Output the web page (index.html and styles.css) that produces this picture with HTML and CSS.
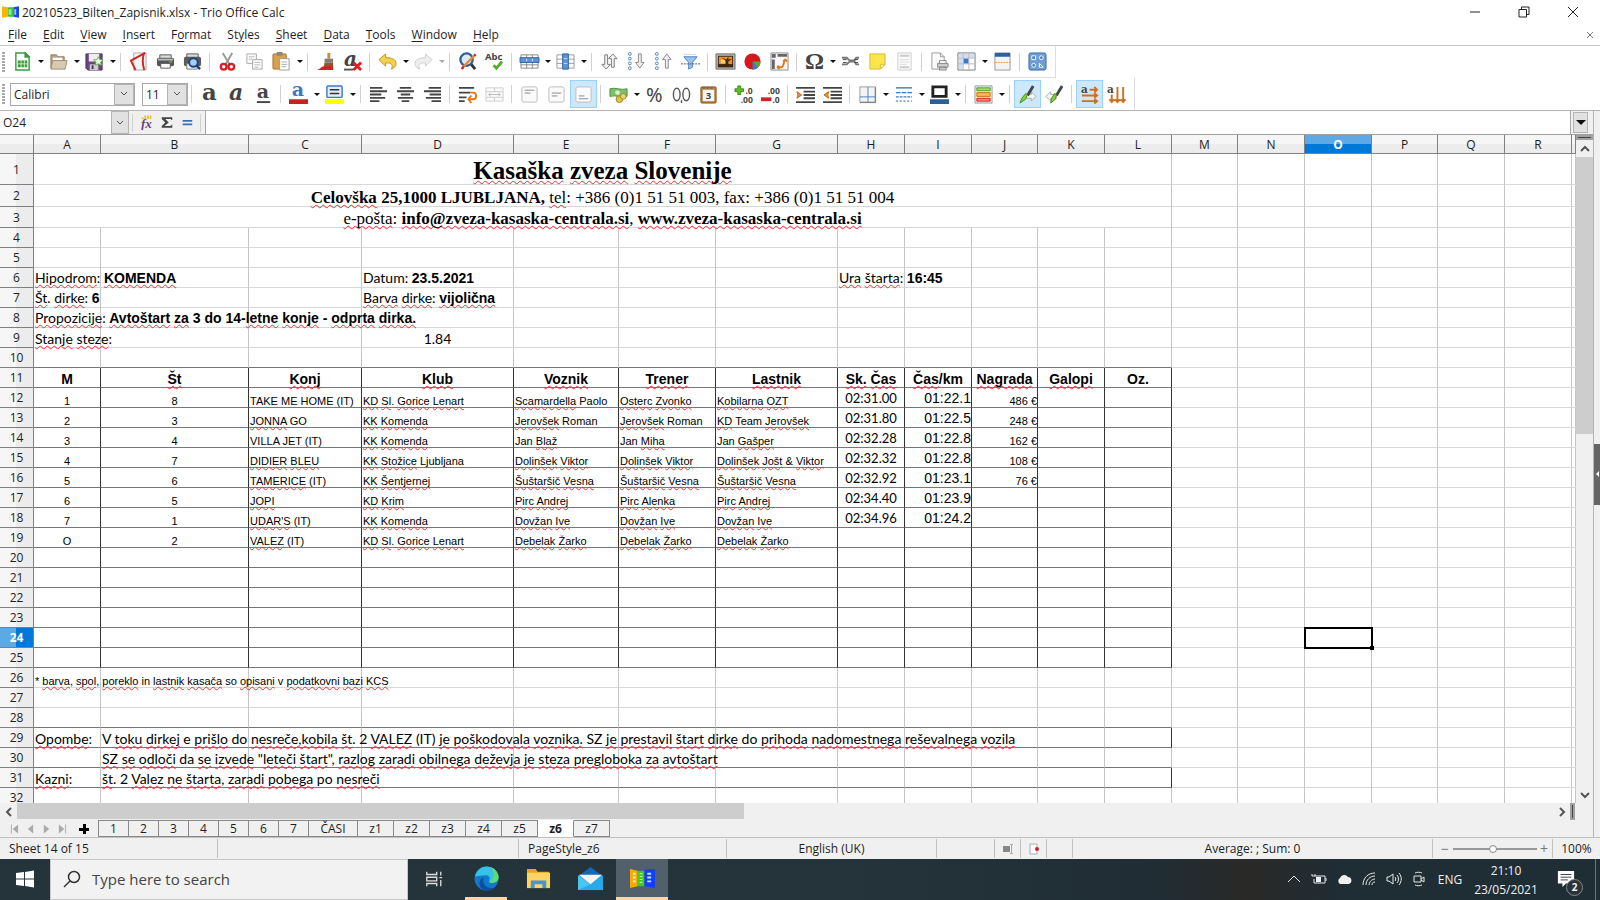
FILE: index.html
```html
<!DOCTYPE html>
<html lang="en">
<head>
    <meta charset="UTF-8">
    <meta name="viewport" content="width=device-width, initial-scale=1.0">
    <title>20210523_Bilten_Zapisnik.xlsx - Trio Office Calc</title>
    <link rel="stylesheet" href="styles.css">
</head>
<body>
    <header class="title-bar">
        <svg class="app-icon" viewBox="0 0 18 14"><path fill="#f7b500" d="M0 1l6 1v10l-6 1z"/><path fill="#35c435" d="M6 2h6v10H6z"/><path fill="#1747f0" d="M12 2l6-1v12l-6-1z"/><path fill="#9be89b" d="M7 4h3v6H7z"/><path fill="#a9c4ff" d="M13 4h2v6h-2z"/></svg>
        <span class="title-text">20210523_Bilten_Zapisnik.xlsx - Trio Office Calc</span>
        <div class="window-buttons">
            <button aria-label="Minimize"><svg viewBox="0 0 12 12"><path d="M1 6h10"/></svg></button>
            <button aria-label="Restore"><svg viewBox="0 0 12 12"><path d="M1 3.5h7.500v7.500H1zM3.500 3.500V1H11v7.500H8.500"/></svg></button>
            <button aria-label="Close"><svg viewBox="0 0 12 12"><path d="M1 1l10 10M11 1L1 11"/></svg></button>
        </div>
    </header>

    <nav class="menu-bar">
        <a href="#file"><u>F</u>ile</a>
        <a href="#edit"><u>E</u>dit</a>
        <a href="#view"><u>V</u>iew</a>
        <a href="#insert"><u>I</u>nsert</a>
        <a href="#format">F<u>o</u>rmat</a>
        <a href="#styles">St<u>y</u>les</a>
        <a href="#sheet"><u>S</u>heet</a>
        <a href="#data"><u>D</u>ata</a>
        <a href="#tools"><u>T</u>ools</a>
        <a href="#window"><u>W</u>indow</a>
        <a href="#help"><u>H</u>elp</a>
        <button class="close-doc" aria-label="Close document"><svg viewBox="0 0 8 8"><path d="M1 1l6 6M7 1L1 7"/></svg></button>
    </nav>

    <!-- Standard toolbar -->
    <div class="toolbar standard">
        <span class="grip"></span>
        <button class="tool" aria-label="New"><svg viewBox="0 0 20 20"><path fill="#fff" stroke="#3d9a3d" stroke-width="1.500" d="M3 1h10l4 4v14H3z"/><path fill="#3d9a3d" d="M12 0h1l5 5v1h-6zM5 9h10v7H5z"/><path stroke="#c8f0c0" d="M5 12.500h10M8.500 9v7M12 9v7"/></svg></button>
        <button class="caret" aria-label="New options"></button>
        <button class="tool" aria-label="Open"><svg viewBox="0 0 20 20"><path fill="#b8a78a" stroke="#8d7c62" d="M2 17V3h6l1 2h7v4"/><path fill="#fff" d="M4 6h10v4H4z"/><path fill="#d8cab0" stroke="#9c8b70" d="M4 9h15l-2 9H2z"/></svg></button>
        <button class="caret" aria-label="Open options"></button>
        <button class="tool" aria-label="Save"><svg viewBox="0 0 20 20"><path fill="#6c4580" stroke="#4b2c5e" d="M1 2h17v17H3l-2-2z"/><path fill="#eee" d="M4 2h11v8H4z"/><path fill="#ccc" d="M5 13h9v6H5z"/><path fill="#4b2c5e" d="M7 14h2v4H7z"/><path fill="#e8ffe0" stroke="#5bbb3a" d="M14 5l1.500 3 3.500.3-2.500 2.400.8 3.300-3.300-1.600-3 1.600.6-3.500L9 8.300l3.500-.3z"/></svg></button>
        <button class="caret" aria-label="Save options"></button>
        <span class="sep"></span>
        <button class="tool" aria-label="Export as PDF"><svg viewBox="0 0 20 20"><path fill="#f4f4f4" stroke="#aaa" d="M5 1h13v18H5z"/><path fill="none" stroke="#cf2222" stroke-width="2" d="M17 1L2 9l5 10M16 1c-2 5-2 11 0 18"/></svg></button>
        <button class="tool" aria-label="Print"><svg viewBox="0 0 20 20"><path fill="#ddd" stroke="#555" d="M4 3h12v5H4z"/><rect x="1" y="6" width="18" height="9" rx="2" fill="#555"/><path fill="#b9b9b9" d="M2 7h16v2H2z"/><path fill="#fff" stroke="#555" d="M5 12h10v5H5z"/><path stroke="#7fcf5f" d="M14 10.500h3"/></svg></button>
        <button class="tool" aria-label="Print Preview"><svg viewBox="0 0 20 20"><path fill="#ddd" stroke="#555" d="M4 2h12v5H4z"/><rect x="1" y="5" width="18" height="10" rx="2" fill="#5a5a5a"/><path fill="#fff" stroke="#777" d="M4 12h11v6H4z"/><circle cx="11" cy="11" r="4.500" fill="#a9cdf2" stroke="#1d4480" stroke-width="2"/><path stroke="#1d4480" stroke-width="2.500" d="M14 14l4 4"/></svg></button>
        <span class="sep"></span>
        <button class="tool" aria-label="Cut"><svg viewBox="0 0 20 20"><path stroke="#999" stroke-width="2" d="M5 1l7 12M15 1L8 13"/><g fill="none" stroke="#d3202a" stroke-width="2.500"><circle cx="6" cy="15.500" r="3"/><circle cx="14" cy="15.500" r="3"/></g></svg></button>
        <button class="tool" aria-label="Copy"><svg viewBox="0 0 20 20"><g fill="#fafafa" stroke="#aaa"><path d="M2 2h10v10H2z"/><path d="M8 8h10v10H8z"/></g><path stroke="#bbb" d="M4 5h6M4 7.500h4M10 11h6M10 13.500h6M10 16h4"/></svg></button>
        <button class="tool" aria-label="Paste"><svg viewBox="0 0 20 20"><rect x="1" y="2" width="14" height="16" rx="1" fill="#d9a04e" stroke="#a8742c"/><path fill="#888" d="M5 0h6v4H5z"/><path fill="#fff" stroke="#999" d="M8 7h10v12H8z"/><path stroke="#aaa" d="M10 10.500h6M10 13h6M10 15.500h5"/></svg></button>
        <button class="caret" aria-label="Paste options"></button>
        <span class="sep"></span>
        <button class="tool" aria-label="Clone Formatting"><svg viewBox="0 0 20 20"><path fill="#c98a35" d="M12 1h3v6h-3z"/><path fill="#7d7d7d" d="M9 7h9v4H9z"/><path fill="#8b5a2b" d="M9 11h9v6H8z"/><path fill="#d3202a" d="M1 19c3-1 4-3 7-4h10v4z"/></svg></button>
        <button class="tool" aria-label="Clear Formatting"><svg viewBox="0 0 20 20"><text class="glyph slab italic" x="1" y="15" font-size="21">a</text><path stroke="#555" stroke-width="2" d="M1 18.500h10"/><path stroke="#e02020" stroke-width="3" d="M11 11l8 8M19 11l-8 8"/></svg></button>
        <span class="sep"></span>
        <button class="tool" aria-label="Undo"><svg viewBox="0 0 20 20"><path fill="#f3d24a" stroke="#b8962a" d="M1 8l7-6v4c7 0 11 2 11 6 0 3-2 5-5 6 2-4 1-7-6-6.500V15z"/></svg></button>
        <button class="caret" aria-label="Undo options"></button>
        <button class="tool" aria-label="Redo"><svg viewBox="0 0 20 20"><path fill="#eee" stroke="#ccc" d="M19 8l-7-6v4C5 6 1 8 1 12c0 3 2 5 5 6-2-4-1-7 6-6.500V15z"/></svg></button>
        <button class="caret faded" aria-label="Redo options"></button>
        <span class="sep"></span>
        <button class="tool" aria-label="Find and Replace"><svg viewBox="0 0 20 20"><circle cx="9" cy="8" r="6.500" fill="#dceafa" stroke="#2e5fa3" stroke-width="2.500"/><path stroke="#333" stroke-width="3" d="M14 13l4 5"/><path stroke="#e88a2a" stroke-width="2.500" d="M17 4L6 15"/><path stroke="#d3202a" stroke-width="2.500" d="M17 4l1.500-1.500M6 15l-2 3"/></svg></button>
        <button class="tool" aria-label="Spelling"><svg viewBox="0 0 20 20"><text class="glyph bold" x="0" y="8" font-size="10">Abc</text><path fill="none" stroke="#57ae2e" stroke-width="3" d="M9 14l3 3 6-7"/></svg></button>
        <span class="sep"></span>
        <button class="tool" aria-label="Row"><svg viewBox="0 0 20 20"><path fill="#fff" stroke="#888" d="M1 3h18v14H1z"/><path stroke="#888" d="M1 13.500h18M7 3v14M13 3v14"/><path fill="#5b93d3" stroke="#2e5fa3" d="M0 6h20v5H0z"/><path stroke="#cfe2f7" d="M7 7v3M13 7v3"/></svg></button>
        <button class="caret" aria-label="Row options"></button>
        <button class="tool" aria-label="Column"><svg viewBox="0 0 20 20"><path fill="#fff" stroke="#999" d="M1 3h18v14H1z"/><path stroke="#999" d="M1 7.500h18M1 12h18"/><path fill="#5b93d3" stroke="#2e5fa3" d="M7 2h6v16H7z"/><path stroke="#cfe2f7" d="M8 7h4M8 12h4"/></svg></button>
        <button class="caret" aria-label="Column options"></button>
        <span class="sep"></span>
        <button class="tool" aria-label="Sort"><svg viewBox="0 0 20 20"><g fill="#f2f2f2" stroke="#777"><path d="M5 3h3v10h3l-4.500 5L2 13h3z"/><path d="M12 16h3V7h3l-4.500-5L9 7h3z"/></g></svg></button>
        <button class="tool" aria-label="Sort Ascending"><svg viewBox="0 0 20 20"><g fill="#fff" stroke="#4a82c8"><circle cx="3" cy="2" r="1.500"/><circle cx="3" cy="7" r="1.500"/><circle cx="3" cy="12" r="1.500"/><circle cx="3" cy="17" r="1.500"/></g><path fill="#eee" stroke="#888" d="M12 2h3v9h3l-4.500 6L9 11h3z"/></svg></button>
        <button class="tool" aria-label="Sort Descending"><svg viewBox="0 0 20 20"><g fill="#fff" stroke="#4a82c8"><circle cx="3" cy="2" r="1.500"/><circle cx="3" cy="7" r="1.500"/><circle cx="3" cy="12" r="1.500"/><circle cx="3" cy="17" r="1.500"/></g><path fill="#eee" stroke="#888" d="M12 17h3V8h3l-4.500-6L9 8h3z"/></svg></button>
        <button class="tool" aria-label="AutoFilter"><svg viewBox="0 0 20 20"><path fill="#9cc3ec" stroke="#4a82c8" d="M3 5h14l-5 6v5l-4 2v-7z"/><path stroke="#aaa" stroke-dasharray="1 1" d="M3 2.500h14"/><path stroke="#555" stroke-dasharray="2 1" d="M0 12.500h20"/></svg></button>
        <span class="sep"></span>
        <button class="tool" aria-label="Image"><svg viewBox="0 0 20 20"><path fill="#bbb" stroke="#666" d="M0 2h20v16H0z"/><path fill="#3f2710" d="M2 4h16v12H2z"/><path fill="#e8902c" d="M3 5h14v8H3z"/><path fill="#f8d070" d="M5 8h6v4H5z"/><path fill="#3f2710" d="M2 13h8V9L6 6l5 2 2-3v3l4-1-4 3v3h5v3H2z"/></svg></button>
        <button class="tool" aria-label="Chart"><svg viewBox="0 0 20 20"><circle cx="10" cy="10" r="8.500" fill="#d8161c"/><path fill="#5aa83a" d="M10 10l8.500 0a8.500 8.500 0 0 1-3 6.500z"/><path fill="#3d78c4" d="M10 10l5.500 6.500A8.500 8.500 0 0 1 10 18.500z"/></svg></button>
        <button class="tool" aria-label="Pivot Table"><svg viewBox="0 0 20 20"><path fill="#f7f7f7" stroke="#888" d="M1 1h18v18H1z"/><path fill="#666" d="M2 2h4v4H2zM8 2h10v3H8zM2 8h3v10H2z"/><path fill="none" stroke="#e07818" stroke-width="2" d="M9 16h3c3 0 2-7 4-7M9 14l-1 2 2 2M14 10l2-2 2 2"/></svg></button>
        <span class="sep"></span>
        <button class="tool" aria-label="Special Character"><svg viewBox="0 0 20 20"><text class="glyph serif-bold" x="0" y="18" font-size="25">Ω</text></svg></button>
        <button class="caret" aria-label="Special Character options"></button>
        <button class="tool" aria-label="Hyperlink"><svg viewBox="0 0 20 20"><g fill="none" stroke="#777" stroke-width="2"><path d="M1 6h5l3 3h5l2-3h3M1 13h5l3-3h5l2 3h3"/></g><path stroke="#444" d="M2 8h4M2 11h4M14 8h4M14 11h4"/></svg></button>
        <button class="tool" aria-label="Comment"><svg viewBox="0 0 20 20"><path fill="#fbe44c" stroke="#d9bd2a" d="M2 2h16v11l-5 5H2z"/><path fill="#fff6b0" stroke="#d9bd2a" d="M13 18v-5h5z"/></svg></button>
        <button class="tool" aria-label="Headers and Footers"><svg viewBox="0 0 20 20"><path fill="#fafafa" stroke="#ccc" d="M3 1h14v18H3z"/><path stroke="#ccc" stroke-width="2" d="M5 4h10M5 16h10"/><path stroke="#ddd" d="M5 8h10M5 10.500h10M5 13h8"/></svg></button>
        <span class="sep"></span>
        <button class="tool" aria-label="Define Print Area"><svg viewBox="0 0 20 20"><path fill="#fafafa" stroke="#999" d="M2 1h9l4 4v13H2z"/><path fill="none" stroke="#999" d="M11 1v4h4"/><path fill="#fff" stroke="#888" d="M10 9h7v4h-7z"/><path fill="#ccc" stroke="#888" d="M8 12h11v4H8zM10 16h7v3h-7z"/></svg></button>
        <button class="tool" aria-label="Freeze Rows and Columns"><svg viewBox="0 0 20 20"><path fill="#fff" stroke="#777" d="M1 1h18v18H1z"/><path fill="#cfe0f3" d="M2 2h16v4H2zM2 2h4v16H2z"/><path stroke="#bbb" d="M1 6.500h18M1 12.500h18M6.500 1v18M12.500 1v18"/><path fill="#3d78c4" d="M7 7h5v5H7z"/></svg></button>
        <button class="caret" aria-label="Freeze options"></button>
        <button class="tool" aria-label="Split Window"><svg viewBox="0 0 20 20"><path fill="#f4f4f4" stroke="#999" d="M2 1h16v18H2z"/><path fill="#2e5fa3" d="M2 1h16v4H2z"/><path stroke="#e8902c" stroke-dasharray="2 1" d="M2 11h16"/></svg></button>
        <span class="sep"></span>
        <button class="tool" aria-label="Show Draw Functions"><svg viewBox="0 0 20 20"><rect x="1" y="1" width="18" height="18" rx="2" fill="#6f9dd6" stroke="#3b69a8"/><g fill="#4a7dc0" stroke="#fff"><path d="M4 4h4v4H4zM12 16l0-4 4 4z"/><circle cx="14" cy="6" r="2"/><circle cx="6" cy="14" r="2"/></g></svg></button>
    </div>

    <!-- Formatting toolbar -->
    <div class="toolbar formatting">
        <span class="grip"></span>
        <label class="combo font-name"><select aria-label="Font Name"><option>Calibri</option></select></label>
        <label class="combo font-size"><select aria-label="Font Size"><option>11</option></select></label>
        <span class="sep"></span>
        <button class="tool" aria-label="Bold"><svg viewBox="0 0 20 20"><text class="glyph slab" x="2" y="16" font-size="24">a</text></svg></button>
        <button class="tool" aria-label="Italic"><svg viewBox="0 0 20 20"><text class="glyph slab italic" x="2" y="16" font-size="23">a</text></svg></button>
        <button class="tool" aria-label="Underline"><svg viewBox="0 0 20 20"><text class="glyph slab" x="3" y="14" font-size="20">a</text><path stroke="#444" stroke-width="2" d="M3 18h14"/></svg></button>
        <span class="sep"></span>
        <button class="tool" aria-label="Font Color"><svg viewBox="0 0 20 20"><text class="glyph slab blue" x="3" y="12" font-size="20">a</text><path fill="#c9211e" d="M0 15h20v5H0z"/></svg></button>
        <button class="caret" aria-label="Font Color options"></button>
        <button class="tool" aria-label="Highlighting"><svg viewBox="0 0 20 20"><rect x="2" y="1" width="16" height="12" rx="1" fill="#e4eefa" stroke="#3d78c4" stroke-width="1.500"/><path stroke="#333" stroke-width="1.500" d="M5 5h10M5 9h10"/><path fill="#ff0" d="M0 15h20v5H0z"/></svg></button>
        <button class="caret" aria-label="Highlighting options"></button>
        <span class="sep"></span>
        <button class="tool" aria-label="Align Left"><svg class="lines" viewBox="0 0 20 20"><path d="M1 3h13M1 6.500h18M1 10h12M1 13.500h16M1 17h10"/></svg></button>
        <button class="tool" aria-label="Center Horizontally"><svg class="lines" viewBox="0 0 20 20"><path d="M4 3h12M1 6.500h18M5 10h10M2 13.500h16M6 17h8"/></svg></button>
        <button class="tool" aria-label="Align Right"><svg class="lines" viewBox="0 0 20 20"><path d="M6 3h13M1 6.500h18M7 10h12M3 13.500h16M9 17h10"/></svg></button>
        <span class="sep"></span>
        <button class="tool" aria-label="Wrap Text"><svg viewBox="0 0 20 20"><path stroke="#444" stroke-width="2" d="M1 3h16M1 8h12M1 13h8M1 17h6"/><path fill="none" stroke="#e07818" stroke-width="2" d="M13 8h3c4 0 4 7 0 7h-4M14 11l-3 4 3 4"/></svg></button>
        <button class="tool" aria-label="Merge and Center Cells"><svg viewBox="0 0 20 20"><path fill="#fafafa" stroke="#ccc" d="M1 3h18v14H1z"/><path stroke="#ccc" d="M1 7h18M1 13h18M10 3v4M10 13v4"/><path fill="none" stroke="#bbb" d="M4 10h12M6 8l-2 2 2 2M14 8l2 2-2 2"/></svg></button>
        <span class="sep"></span>
        <button class="tool" aria-label="Align Top"><svg class="valign" viewBox="0 0 20 20"><rect x="2" y="2" width="16" height="16" rx="2"/><path d="M5 5.500h10M5 8.500h6"/></svg></button>
        <button class="tool" aria-label="Center Vertically"><svg class="valign" viewBox="0 0 20 20"><rect x="2" y="2" width="16" height="16" rx="2"/><path d="M5 8.500h10M5 11.500h6"/></svg></button>
        <button class="tool pressed" aria-label="Align Bottom"><svg class="valign" viewBox="0 0 20 20"><rect x="2" y="2" width="16" height="16" rx="2"/><path d="M5 11.500h6M5 14.500h10"/></svg></button>
        <span class="sep"></span>
        <button class="tool" aria-label="Format as Currency"><svg viewBox="0 0 20 20"><path fill="#7fbf6a" stroke="#4c8f3a" d="M1 4c5-2 12 2 18 0v8c-6 2-12-2-18 0z"/><circle cx="9" cy="8" r="2.500" fill="#d8f0cc"/><circle cx="11" cy="15" r="3.500" fill="#e0c44a" stroke="#a08420"/><circle cx="15" cy="12" r="3" fill="#ecd670" stroke="#a08420"/></svg></button>
        <button class="caret" aria-label="Currency options"></button>
        <button class="tool" aria-label="Format as Percent"><svg viewBox="0 0 20 20"><text class="glyph" x="1" y="18" font-size="21">%</text></svg></button>
        <button class="tool" aria-label="Format as Number"><svg viewBox="0 0 20 20"><g fill="none" stroke="#555" stroke-width="1.500"><ellipse cx="5" cy="10" rx="3.500" ry="6.500"/><ellipse cx="15" cy="10" rx="3.500" ry="6.500"/></g><path stroke="#555" stroke-width="1.500" d="M10 16v3"/></svg></button>
        <button class="tool" aria-label="Format as Date"><svg viewBox="0 0 20 20"><rect x="2" y="2" width="16" height="17" rx="1" fill="#b98443" stroke="#805521"/><path fill="#f6f6f6" d="M4 5h12v12H4z"/><path stroke="#666" stroke-width="2" stroke-dasharray="2 2" d="M4 3h12"/><text class="glyph bold" x="7" y="15" font-size="10">3</text></svg></button>
        <span class="sep"></span>
        <button class="tool" aria-label="Add Decimal Place"><svg viewBox="0 0 20 20"><path fill="#5cc42a" stroke="#3a8a16" d="M4 1h3v3h3v3H7v3H4V7H1V4h3z"/><text class="glyph bold" x="12" y="9" font-size="9">.0</text><text class="glyph bold" x="7" y="19" font-size="9">.00</text></svg></button>
        <button class="tool" aria-label="Delete Decimal Place"><svg viewBox="0 0 20 20"><path fill="#d3202a" d="M0 13h11v4H0z"/><text class="glyph bold" x="7" y="9" font-size="9">.00</text><text class="glyph bold" x="12" y="19" font-size="9">.0</text></svg></button>
        <span class="sep"></span>
        <button class="tool" aria-label="Increase Indent"><svg viewBox="0 0 20 20"><path stroke="#444" stroke-width="2" d="M0 3h20M8 7h12M8 10.500h12M8 14h12M0 18h20"/><path fill="#e8902c" stroke="#c86810" d="M1 7l5 3.500L1 14l1-3.500z"/></svg></button>
        <button class="tool" aria-label="Decrease Indent"><svg viewBox="0 0 20 20"><path stroke="#444" stroke-width="2" d="M0 3h20M8 7h12M8 10.500h12M8 14h12M0 18h20"/><path fill="#e8902c" stroke="#c86810" d="M6 7l-5 3.500L6 14l-1-3.500z"/></svg></button>
        <span class="sep"></span>
        <button class="tool" aria-label="Borders"><svg viewBox="0 0 20 20"><path fill="#f4f4f4" stroke="#999" d="M2 2h16v16H2z"/><path stroke="#4a82c8" d="M10.500 2v16M2 12.500h16"/><path fill="none" stroke="#777" d="M2 18.500h16.500V2"/></svg></button>
        <button class="caret" aria-label="Borders options"></button>
        <button class="tool" aria-label="Border Style"><svg viewBox="0 0 20 20"><g stroke="#3d78c4" stroke-width="1.500"><path d="M2 3h17"/><path stroke-dasharray="5 1" d="M2 8h17"/><path stroke-dasharray="3 1" d="M2 12.500h17"/><path stroke-dasharray="2 2" d="M2 17h17"/></g></svg></button>
        <button class="caret" aria-label="Border Style options"></button>
        <button class="tool" aria-label="Border Color"><svg viewBox="0 0 20 20"><path fill="#fff" stroke="#222" stroke-width="3" d="M3 2h14v10H3z"/><path fill="#2a6099" d="M0 15h20v5H0z"/></svg></button>
        <button class="caret" aria-label="Border Color options"></button>
        <span class="sep"></span>
        <button class="tool" aria-label="Conditional Formatting"><svg viewBox="0 0 20 20"><path fill="#f0f0f0" stroke="#999" d="M1 1h18v18H1z"/><path fill="#a8e060" stroke="#4c9a20" d="M3 3h14v3H3z"/><path fill="#ffb060" stroke="#d07010" d="M3 8h14v4H3z"/><path fill="#ff8080" stroke="#d02020" d="M3 14h14v3H3z"/></svg></button>
        <button class="caret" aria-label="Conditional Formatting options"></button>
        <span class="sep"></span>
        <button class="tool pressed" aria-label="Left-To-Right"><svg viewBox="0 0 20 20"><path fill="#f4f4f4" stroke="#aaa" d="M9 10h5V7l5 5-5 5v-3H9z"/><path stroke="#444" stroke-width="3" d="M16 1l-6 10"/><path fill="#7fcf3f" stroke="#4c8f1a" d="M10 10l-2-1-4 5-2 5 6-4z"/></svg></button>
        <button class="tool" aria-label="Right-To-Left"><svg viewBox="0 0 20 20"><path fill="#f4f4f4" stroke="#aaa" d="M12 10H6V7l-5 5 5 5v-3h6z"/><path stroke="#444" stroke-width="3" d="M18 1l-6 10"/><path fill="#7fcf3f" stroke="#4c8f1a" d="M12 10l-2-1-3 5-1 5 5-4z"/></svg></button>
        <span class="sep"></span>
        <button class="tool pressed" aria-label="Text direction left to right"><svg viewBox="0 0 20 20"><text class="glyph slab" x="1" y="8" font-size="11">a</text><path fill="none" stroke="#d0701c" stroke-width="2" d="M10 5h8M2 11h16M2 17h16M15 2l3 3-3 3M15 8.500l3 2.500-3 2.500M15 14.500l3 2.500-3 2.500"/></svg></button>
        <button class="tool" aria-label="Text direction top to bottom"><svg viewBox="0 0 20 20"><text class="glyph slab" x="0" y="8" font-size="11">a</text><path fill="none" stroke="#d0701c" stroke-width="2" d="M5 10v8M11 2v16M17 2v16M2.500 15L5 18l2.500-3M8.500 15l2.500 3 2.500-3M14.500 15l2.500 3 2.500-3"/></svg></button>
    </div>

    <div class="workspace">
        <main class="document">
            <div class="formula-bar">
                <div class="name-box">
                    <input type="text" value="O24" aria-label="Name Box">
                    <button aria-label="Name Box list"></button>
                </div>
                <span class="sep"></span>
                <button class="formula-tool" aria-label="Function Wizard"><svg viewBox="0 0 16 16"><path stroke="#e8c62a" stroke-width="2" stroke-dasharray="2 1" d="M2 3h12M5 1h8"/><text class="glyph fx" x="1" y="14" font-size="15">fx</text></svg></button>
                <button class="formula-tool" aria-label="Select Function"><svg viewBox="0 0 16 16"><path fill="#444" d="M2 2h12v3h-1c0-1-1-1-2-1H6l4 4-5 4h6c2 0 2-1 3-2v4H2v-2l4-4-4-4z"/></svg></button>
                <button class="formula-tool" aria-label="Formula"><svg viewBox="0 0 16 16"><path stroke="#3d6fa8" stroke-width="2" d="M3 6h11M3 10h11"/></svg></button>
                <span class="sep"></span>
                <input class="formula-input" type="text" aria-label="Input line">
                <button class="expand" aria-label="Expand Formula Bar"></button>
            </div>

            <div class="sheet-area">
                <div class="sheet-clip">
                    <table class="sheet">
                        <colgroup>
                            <col class="w-head"><col class="w-a"><col class="w-b"><col class="w-c"><col class="w-d"><col class="w-e"><col class="w-f"><col class="w-g">
                            <col class="w-a"><col class="w-a"><col class="w-j"><col class="w-a"><col class="w-a"><col class="w-j"><col class="w-a"><col class="w-a"><col class="w-j"><col class="w-a"><col class="w-a"><col>
                        </colgroup>
                        <thead><tr id="columnHeads"></tr></thead>
                        <tbody id="rows"></tbody>
                    </table>
                </div>
                <div class="v-scroll">
                    <span class="split-handle"></span>
                    <button aria-label="Scroll up"><svg viewBox="0 0 10 10"><path d="M1 7l4-4 4 4"/></svg></button>
                    <div class="v-track"><div class="v-thumb"></div></div>
                    <button aria-label="Scroll down"><svg viewBox="0 0 10 10"><path d="M1 3l4 4 4-4"/></svg></button>
                </div>
            </div>

            <div class="h-scroll">
                <button aria-label="Scroll left"><svg viewBox="0 0 10 10"><path d="M7 1L3 5l4 4"/></svg></button>
                <div class="h-track"><div class="h-thumb"></div></div>
                <button aria-label="Scroll right"><svg viewBox="0 0 10 10"><path d="M3 1l4 4-4 4"/></svg></button>
                <span class="h-split"></span>
            </div>

            <div class="tab-bar">
                <button class="tab-nav" aria-label="First sheet"><svg viewBox="0 0 10 10"><path d="M1 0h1v10H1zM9 0v10L3 5z"/></svg></button>
                <button class="tab-nav" aria-label="Previous sheet"><svg viewBox="0 0 10 10"><path d="M8 0v10L2 5z"/></svg></button>
                <button class="tab-nav" aria-label="Next sheet"><svg viewBox="0 0 10 10"><path d="M2 0v10l6-5z"/></svg></button>
                <button class="tab-nav" aria-label="Last sheet"><svg viewBox="0 0 10 10"><path d="M1 0v10l6-5zM8 0h1v10H8z"/></svg></button>
                <button class="add-sheet" aria-label="Add sheet"><svg viewBox="0 0 10 10"><path d="M4 0h3v4h3v3H7v3H4V7H0V4h4z"/></svg></button>
                <div class="tabs">
                    <button>1</button><button>2</button><button>3</button><button>4</button><button>5</button><button>6</button><button>7</button><button class="wide">ČASI</button><button class="z">z1</button><button class="z">z2</button><button class="z">z3</button><button class="z">z4</button><button class="z">z5</button><button class="z current">z6</button><button class="z">z7</button>
                </div>
            </div>
        </main>
        <aside class="sidebar-strip"><button aria-label="Show sidebar"></button></aside>
    </div>

    <footer class="status-bar">
        <span class="left">Sheet 14 of 15</span>
        <span></span>
        <span class="left">PageStyle_z6</span>
        <span>English (UK)</span>
        <span></span>
        <span><svg class="status-icon" viewBox="0 0 12 12"><path fill="#888" d="M1 3h7v6H1z"/><path fill="none" stroke="#aaa" d="M8 1.500h3M9.500 1v10M8 10.500h3"/></svg></span>
        <span><svg class="status-icon" viewBox="0 0 12 12"><path fill="#fff" stroke="#aaa" d="M2 1h7v10H2z"/><circle cx="9" cy="6" r="2" fill="#d02030"/></svg></span>
        <span></span>
        <span>Average: ; Sum: 0</span>
        <span class="zoom">
            <button aria-label="Zoom out">−</button>
            <input type="range" min="0" max="100" value="48" aria-label="Zoom">
            <button aria-label="Zoom in">+</button>
        </span>
        <span>100%</span>
    </footer>

    <div class="taskbar">
        <button class="start" aria-label="Start"><svg viewBox="0 0 18 18"><path fill="#fff" d="M0 3l8-1v6.500H0zM9 2l9-1.500v8H9zM0 9.500h8V16l-8-1zM9 9.500h9v8L9 16z"/></svg></button>
        <label class="search">
            <svg viewBox="0 0 18 18"><circle cx="11" cy="7" r="5.500"/><path d="M7 11l-6 6"/></svg>
            <input type="text" placeholder="Type here to search" aria-label="Search">
        </label>
        <button class="app" aria-label="Task View"><svg class="task-view" viewBox="0 0 20 20"><path d="M2 2v3h11V2M2 18v-3h11v3M2 8h11v4H2zM17.500 2v4M17.500 11v7M16 8.500h3"/></svg></button>
        <button class="app open" aria-label="Microsoft Edge"><svg viewBox="0 0 26 26"><circle cx="13" cy="13" r="12.500" fill="#1278c8"/><path fill="#35c1e8" d="M1 11C3 3 9 0 14 .5c7 .5 11.500 6 11.500 11 0 4-3 6-6.500 6-3 0-4-1-3-3 1-3-1-5-4-5-4 0-8 1-11 1.500z"/><path fill="#5fdc6c" d="M17 1c5 2 8.500 6 8.500 10.500 0 4-3 6-6.500 6-2 0-3-.5-3.200-1.500C22 14 22 6 17 1z"/><path fill="#0c4f9e" d="M10 12c-2 6 2 11 8 11 2 0 4-1 5-2-3 4-7 5-11 4.500C7 24 5 20 6 16c.5-2 2-3.500 4-4z"/></svg></button>
        <button class="app" aria-label="File Explorer"><svg viewBox="0 0 26 26"><path fill="#e8a81c" d="M1 3h9l2 3h12v4H1z"/><path fill="#fcd462" d="M1 7h24v16H1z"/><path fill="#3f96dc" d="M5 23v-8h16v8h-4v-4H9v4z"/></svg></button>
        <button class="app" aria-label="Mail"><svg viewBox="0 0 26 26"><path fill="#0f6cbd" d="M0 11L13 1l13 10z"/><path fill="#29a9ea" d="M0 10h26v15H0z"/><path fill="#f4f4f4" d="M1 9h24l-12 10z"/><path fill="#4cc4f4" d="M0 10l13 9L0 25z"/></svg></button>
        <button class="app open active" aria-label="Trio Office Calc"><svg viewBox="0 0 26 26"><path fill="#f9a800" d="M0 3l8 2v16l-8 2z"/><path fill="#46c820" d="M8 5h7v16H8z"/><path fill="#1040f0" d="M15 4l11-1v20l-11-2z"/><path stroke="#fff" stroke-opacity=".8" stroke-width="2" d="M3 8h3M3 12h3M3 16h3M18 8h4M18 12h4M18 16h4"/><path stroke="#c8f8b8" d="M10 8h3M10 11h3M10 14h3M10 17h3"/></svg></button>
        <div class="tray">
            <button aria-label="Show hidden icons"><svg viewBox="0 0 16 16"><path d="M2 11l6-6 6 6"/></svg></button>
            <button aria-label="Battery"><svg viewBox="0 0 16 16"><path d="M4 5h10v7H3V8M15 7v3M1 3v2h3V3"/><path class="solid" d="M5 6h5v5H5z"/></svg></button>
            <button aria-label="OneDrive"><svg viewBox="0 0 16 16"><path class="solid" d="M4 13a3.500 3.500 0 0 1 0-6 4.500 4.500 0 0 1 8-1 3.600 3.600 0 0 1 1 7z"/></svg></button>
            <button aria-label="Network"><svg viewBox="0 0 16 16"><path d="M2 14C2 7 7 2 14 2M5 14c0-5 4-9 9-9M8 14c0-3 3-6 6-6M11 14c0-2 1-3 3-3"/></svg></button>
            <button aria-label="Volume"><svg viewBox="0 0 16 16"><path d="M1 6h2l4-3v10l-4-3H1zM9 6c1 1 1 3 0 4M11 4c2 2 2 6 0 8M13 2c3 4 3 8 0 12"/></svg></button>
            <button aria-label="Meet Now"><svg viewBox="0 0 16 16"><path d="M3 5h7v6H3zM10 8l3-2v5l-3-2M4 2c2-1 5-1 7 0M4 14c2 1 5 1 7 0"/></svg></button>
            <span class="lang">ENG</span>
            <span class="clock">21:10<br>23/05/2021</span>
            <button class="notify" aria-label="Notifications"><svg viewBox="0 0 20 20"><path fill="#fff" d="M1 1h18v14h-9l-4 4v-4H1z"/><path stroke="#263238" d="M4 5h12M4 8h12M4 11h8"/></svg><span class="badge">2</span></button>
            <span class="show-desktop"></span>
        </div>
    </div>

    <script>
        const letters = 'ABCDEFGHIJKLMNOPQR'.split('');
        const active = { col: 'O', row: 24 };

        // {word} = underlined by the spell checker, *text* = bold
        function format(text) {
            return text
                .replace(/\{([^}]*)\}/g, '<span class="typo">$1</span>')
                .replace(/\*([^*]+)\*/g, '<b>$1</b>');
        }

        const merged = {
            1: ['title', '{Kasaška} {zveza} {Slovenije}'],
            2: ['address', '*{Celovška} 25,1000 LJUBLJANA,* {tel}: +386 (0)1 51 51 003, fax: +386 (0)1 51 51 004'],
            3: ['address', '{e-pošta}: *{info@zveza-kasaska-centrala.si}*, *{www.zveza-kasaska-centrala.si}*']
        };

        const cells = {
            A6: '{Hipodrom}: *{KOMENDA}*', D6: 'Datum: *23.5.2021*', H6: '{Ura} {štarta}: *16:45*',
            A7: '{Št}. {dirke}: *6*', D7: '{Barva} {dirke}: *{vijolična}*',
            A8: '{Propozicije}: *{Avtoštart} {za} 3 do 14-{letne} {konje} - {odprta} {dirka.}*',
            A9: '{Stanje} {steze}:', D9: '1.84',
            A26: '* {barva}, {spol}, {poreklo} in {lastnik} {kasača} so {opisani} v {podatkovni} {bazi} {KCS}',
            A29: '{Opombe}:',
            B29: 'V {toku} {dirkej} e {prišlo} do {nesreče,kobila} {št}. 2 {VALEZ} (IT) {je} {poškodovala} {voznika.} SZ {je} {prestavil} {štart} {dirke} do {prihoda} {nadomestnega} {reševalnega} {vozila}',
            B30: '{SZ} {se} {odloči} da {se} {izvede} "{leteči} {štart}", {razlog} {zaradi} {obilnega} {deževja} {je} {steza} {pregloboka} {za} {avtoštart}',
            A31: '{Kazni}:',
            B31: '{št}. 2 {Valez} {ne} {štarta}, {zaradi} {pobega} po {nesreči}'
        };

        const headings = ['M', '{Št}', '{Konj}', '{Klub}', '{Voznik}', '{Trener}', '{Lastnik}', '{Sk.} {Čas}', '{Čas}/km', '{Nagrada}', '{Galopi}', 'Oz.'];
        const results = [
            ['1', '8', 'TAKE ME HOME (IT)', '{KD} {Sl}. {Gorice} {Lenart}', '{Scamardella} Paolo', '{Osterc} {Zvonko}', '{Kobilarna} {OZT}', '02:31.00', '01:22.1', '486 €'],
            ['2', '3', '{JONNA} GO', '{KK} {Komenda}', '{Jerovšek} Roman', '{Jerovšek} Roman', '{KD} Team {Jerovšek}', '02:31.80', '01:22.5', '248 €'],
            ['3', '4', 'VILLA JET (IT)', '{KK} {Komenda}', 'Jan {Blaž}', 'Jan {Miha}', 'Jan {Gašper}', '02:32.28', '01:22.8', '162 €'],
            ['4', '7', '{DIDIER} {BLEU}', '{KK} {Stožice} Ljubljana', '{Dolinšek} {Viktor}', '{Dolinšek} {Viktor}', '{Dolinšek} {Jošt} &amp; {Viktor}', '02:32.32', '01:22.8', '108 €'],
            ['5', '6', '{TAMERICE} (IT)', '{KK} {Šentjernej}', '{Šuštaršič} {Vesna}', '{Šuštaršič} {Vesna}', '{Šuštaršič} {Vesna}', '02:32.92', '01:23.1', '76 €'],
            ['6', '5', '{JOPI}', '{KD} {Krim}', '{Pirc} {Andrej}', '{Pirc} {Alenka}', '{Pirc} {Andrej}', '02:34.40', '01:23.9'],
            ['7', '1', "{UDAR'S} (IT)", '{KK} {Komenda}', '{Dovžan} {Ive}', '{Dovžan} {Ive}', '{Dovžan} {Ive}', '02:34.96', '01:24.2'],
            ['O', '2', '{VALEZ} (IT)', '{KD} {Sl}. {Gorice} {Lenart}', '{Debelak} {Žarko}', '{Debelak} {Žarko}', '{Debelak} {Žarko}']
        ];
        headings.forEach((text, i) => cells[letters[i] + 11] = text);
        results.forEach((line, r) => line.forEach((text, i) => cells[letters[i] + (12 + r)] = text));

        document.getElementById('columnHeads').innerHTML = '<th></th>' +
            letters.map(l => `<th class="${l === active.col ? 'selected' : ''}">${l}</th>`).join('') + '<th></th>';

        function cellClass(col, row) {
            const i = letters.indexOf(col);
            const list = [];
            if (i < 12) {
                if (row >= 11 && row <= 25) list.push('boxed');
                if (row === 10 || row >= 28 && row <= 31) list.push('line-below');
                if (col === 'L' && (row === 29 || row === 31)) list.push('line-right');
                if (row === 11) list.push('heading');
            }
            if (i < 10 && row >= 12 && row <= 19) {
                if (col === 'H') list.push('time', 'center');
                else if (col === 'I') list.push('pace', 'right');
                else list.push('small');
                if (i < 2) list.push('center');
                if (col === 'J') list.push('right');
            }
            if (col === 'D' && row === 9) list.push('center');
            if (row === 26) list.push('small');
            if (col === active.col && row === active.row) list.push('active');
            return list.join(' ');
        }

        let html = '';
        for (let row = 1; row <= 32; row++) {
            html += `<tr class="row-${row}"><th class="${row === active.row ? 'selected' : ''}">${row}</th>`;
            if (merged[row]) {
                html += `<td colspan="12" class="${merged[row][0]}">${format(merged[row][1])}</td>`;
            }
            letters.slice(merged[row] ? 12 : 0).forEach(col => {
                html += `<td class="${cellClass(col, row)}">${format(cells[col + row] || '')}</td>`;
            });
            html += '<td></td></tr>';
        }
        document.getElementById('rows').innerHTML = html;
    </script>
</body>
</html>
```
FILE: styles.css
```css
:root {
    --panel: #f0f0f0;
    --line: #c8c8c8;
    --grid: #c6c6c6;
    --ink: #1e1e1e;
    --accent: #0078d7;
}

* {
    box-sizing: border-box;
}

body {
    margin: 0;
    height: 100vh;
    display: flex;
    flex-direction: column;
    overflow: hidden;
    background: #fff;
    color: var(--ink);
    font-family: "Open Sans", "Noto Sans", sans-serif;
    font-size: 12px;
}

button,
input,
select {
    margin: 0;
    padding: 0;
    border: 0;
    background: none;
    color: inherit;
    font: inherit;
}

svg {
    display: block;
    fill: none;
}

/* TITLE + MENU */
.title-bar {
    flex: none;
    height: 24px;
    display: flex;
    align-items: center;
    padding: 0 3px 0 2px;
}

.app-icon {
    width: 17px;
    height: 14px;
    margin-right: 3px;
}

.window-buttons {
    margin-left: auto;
    display: flex;
}

.window-buttons button {
    width: 49px;
    height: 24px;
    display: grid;
    place-items: center;
}

.window-buttons svg {
    width: 12px;
    height: 12px;
    stroke: #222;
}

.menu-bar {
    flex: none;
    height: 22px;
    display: flex;
    align-items: center;
    gap: 16px;
    padding-left: 8px;
    border-bottom: 1px solid var(--line);
}

.menu-bar a {
    color: inherit;
    text-decoration: none;
}

.menu-bar u {
    text-underline-offset: 2px;
}

.close-doc {
    margin-left: auto;
    padding: 4px 6px;
}

.close-doc svg {
    width: 8px;
    height: 8px;
    stroke: #777;
}

/* TOOLBARS */
.toolbar {
    flex: none;
    height: 32px;
    display: flex;
    align-items: center;
    align-self: flex-start;
    border-right: 1px solid #ddd;
    padding: 0 4px 0 2px;
}

.standard {
    border-bottom: 1px solid #ddd;
}

.grip {
    width: 3px;
    height: 20px;
    margin-right: 4px;
    background: repeating-linear-gradient(#aaa 0 2px, #fff 2px 3px);
}

.tool {
    width: 27px;
    height: 28px;
    display: grid;
    place-items: center;
}

.tool svg {
    width: 19px;
    height: 19px;
    overflow: visible;
}

.tool.pressed {
    background: #cce8ff;
    border: 1px solid #99d1ff;
}

.caret {
    width: 9px;
    height: 28px;
    display: grid;
    place-items: center;
}

.caret::after,
.expand::after {
    content: "";
    border: 3px solid transparent;
    border-top-color: #111;
    border-bottom: 0;
}

.caret.faded::after {
    border-top-color: #aaa;
}

.sep {
    width: 8px;
    height: 18px;
    background: linear-gradient(90deg, transparent 3px, #d0d0d0 3px 4px, transparent 4px);
}

.glyph {
    fill: #444;
    font-family: "Noto Sans", sans-serif;
}

.bold {
    font-weight: 700;
}

.slab {
    font-family: "DejaVu Serif", serif;
    font-weight: 700;
}

.italic {
    font-style: italic;
}

.blue {
    fill: #3d78c4;
}

.serif-bold {
    font-family: "Liberation Serif", serif;
    font-weight: 700;
}

.fx {
    fill: #6d3f85;
    font-family: "Liberation Serif", serif;
    font-style: italic;
    font-weight: 700;
}

.lines {
    stroke: #444;
    stroke-width: 2;
}

.valign {
    fill: #fafafa;
    stroke: #bbb;
}

.valign path {
    stroke: #888;
}

.combo {
    height: 23px;
    display: flex;
    border: 1px solid #a8a8a8;
}

.combo select {
    width: 100%;
    appearance: none;
    padding-left: 3px;
}

.combo::after,
.name-box button {
    width: 18px;
    flex: none;
    background: #e1e1e1 url("data:image/svg+xml,%3Csvg xmlns='http://www.w3.org/2000/svg' width='8' height='6'%3E%3Cpath d='M1 1l3 3 3-3' fill='none' stroke='%23555'/%3E%3C/svg%3E") no-repeat center;
    border: 1px solid #b4b4b4;
}

.combo::after {
    content: "";
}

.font-name {
    width: 125px;
    margin: 0 7px 0 1px;
}

.font-size {
    width: 46px;
}

/* WORKSPACE */
.workspace {
    flex: 1;
    min-height: 0;
    display: flex;
    border-top: 1px solid #b4b4b4;
}

.document {
    flex: 1;
    min-width: 0;
    display: flex;
    flex-direction: column;
    background: var(--panel);
}

.formula-bar {
    flex: none;
    height: 24px;
    display: flex;
    align-items: center;
    border-bottom: 1px solid #a0a0a0;
}

.name-box {
    width: 129px;
    height: 23px;
    display: flex;
    background: #fff;
}

.name-box input {
    flex: 1;
    min-width: 0;
    padding-left: 3px;
}

.formula-tool {
    width: 20px;
    display: grid;
    place-items: center;
}

.formula-tool svg {
    width: 14px;
    height: 15px;
}

.formula-input {
    flex: 1;
    height: 23px;
    background: #fff;
    border-left: 1px solid #a8a8a8;
    border-right: 1px solid #a8a8a8;
}

.expand {
    width: 15px;
    height: 21px;
    margin: 0 5px 0 2px;
    display: grid;
    place-items: center;
    background: #e1e1e1;
    border: 1px solid #b4b4b4;
}

.expand::after {
    border-width: 5px 5px 0;
}

.sheet-area {
    flex: 1;
    min-height: 0;
    display: flex;
}

.sheet-clip {
    flex: 1;
    min-width: 0;
    overflow: hidden;
    background: #fff;
}

.sheet {
    width: 100%;
    table-layout: fixed;
    border-collapse: separate;
    border-spacing: 0;
}

.w-head { width: 34px; }
.w-a { width: 67px; }
.w-b { width: 148px; }
.w-c { width: 113px; }
.w-d { width: 152px; }
.w-e { width: 105px; }
.w-f { width: 97px; }
.w-g { width: 122px; }
.w-j { width: 66px; }

.sheet th {
    height: 20px;
    padding: 1px 0 0;
    font-weight: 400;
    line-height: 16px;
    background: linear-gradient(90deg, #f6f6f6 50%, #ececec 50%);
    border-right: 1px solid #808080;
    border-bottom: 1px solid #808080;
}

.sheet thead th {
    height: 19px;
    background: linear-gradient(#f6f6f6 50%, #ececec 50%);
}

.sheet th.selected {
    color: #fff;
    font-weight: 700;
    background: linear-gradient(90deg, #5ca9e6 50%, var(--accent) 50%);
}

.sheet thead th.selected {
    background: linear-gradient(#5ca9e6 50%, var(--accent) 50%);
}

.sheet td {
    height: 20px;
    padding: 0 1px;
    vertical-align: bottom;
    white-space: nowrap;
    color: #000;
    font-family: Lato, sans-serif;
    font-size: 14px;
    line-height: 17px;
    border-right: 1px solid var(--grid);
    border-bottom: 1px solid #d8d8d8;
}

.sheet .row-1 > * { height: 31px; }
.sheet .row-2 > * { height: 22px; }
.sheet .row-3 > * { height: 21px; }

.sheet td b {
    font-family: "Liberation Sans", sans-serif;
    font-size: 14px;
}

.sheet td.title {
    font-family: "Liberation Serif", serif;
    font-size: 25px;
    font-weight: 700;
    line-height: 27px;
    text-align: center;
}

.sheet td.address,
.sheet td.address b {
    font-family: "Liberation Serif", serif;
    font-size: 17px;
    text-align: center;
}

.sheet td.heading {
    font-family: "Liberation Sans", sans-serif;
    font-weight: 700;
    line-height: 16px;
    text-align: center;
}

.sheet td.small {
    font-family: "Liberation Sans", sans-serif;
    font-size: 11px;
    line-height: 12px;
}

.sheet td.time {
    font-size: 13px;
}

.sheet td.pace {
    font-family: "Liberation Sans", sans-serif;
}

.sheet td.center { text-align: center; }
.sheet td.right { text-align: right; padding-right: 0; }

.sheet td.boxed {
    border-right-color: #333;
    border-bottom-color: #777;
}

.sheet td.line-below { border-bottom-color: #777; }
.sheet td.line-right { border-right-color: #333; }

.sheet td.active {
    position: relative;
    outline: 2px solid #000;
    outline-offset: -1px;
}

/* fill handle */
.sheet td.active::after {
    content: "";
    position: absolute;
    right: -3px;
    bottom: -3px;
    width: 4px;
    height: 4px;
    background: #000;
}

.typo {
    text-decoration: underline wavy #f03030 1px;
    text-decoration-skip-ink: none;
    text-underline-offset: 1px;
}

/* SCROLLBARS */
.v-scroll {
    width: 17px;
    display: flex;
    flex-direction: column;
}

.v-scroll button,
.h-scroll button {
    flex: none;
    width: 17px;
    height: 17px;
    display: grid;
    place-items: center;
}

.v-scroll svg,
.h-scroll svg {
    width: 10px;
    height: 10px;
    stroke: #555;
    stroke-width: 2;
}

.split-handle {
    height: 5px;
    background: #444;
    border: 2px solid #a0a0a0;
}

.v-track {
    flex: 1;
}

.v-thumb {
    height: 44%;
    background: #cdcdcd;
}

.h-scroll {
    flex: none;
    height: 17px;
    display: flex;
    padding-right: 18px;
}

.h-track {
    flex: 1;
}

.h-thumb {
    width: 47.3%;
    height: 16px;
    background: #cdcdcd;
}

.h-split {
    width: 5px;
    background: #444;
    border: 2px solid #a0a0a0;
}

.sidebar-strip {
    width: 7px;
    display: flex;
    align-items: center;
    background: var(--panel);
    border-left: 1px solid #b4b4b4;
}

.sidebar-strip button {
    width: 6px;
    height: 61px;
    display: grid;
    place-items: center;
    background: #666;
}

.sidebar-strip button::after {
    content: "";
    border: 3px solid transparent;
    border-right-color: #fff;
    border-left: 0;
}

/* SHEET TABS */
.tab-bar {
    flex: none;
    height: 17px;
    display: flex;
    padding-left: 6px;
}

.tab-nav,
.add-sheet {
    width: 16px;
    display: grid;
    place-items: center;
}

.tab-nav svg {
    width: 9px;
    height: 10px;
    fill: #aaa;
}

.add-sheet {
    width: 28px;
}

.add-sheet svg {
    width: 10px;
    height: 10px;
    fill: #000;
}

.tabs {
    display: flex;
    border-left: 1px solid #888;
}

.tabs button {
    width: 30px;
    border: 1px solid #888;
    border-left: 0;
    line-height: 14px;
}

.tabs .wide { width: 49px; }
.tabs .z { width: 36px; }

.tabs .current {
    background: #fff;
    border-color: #fff #888 #fff #fff;
    font-weight: 700;
}

/* STATUS BAR */
.status-bar {
    flex: none;
    height: 22px;
    display: grid;
    grid-template-columns: 218fr 301fr 208fr 210fr 58fr 26px 26px 26px 360fr 120px 47px;
    padding: 1px 0;
    background: var(--panel);
    border-top: 1px solid #c0c0c0;
}

.status-bar > span {
    min-width: 0;
    display: flex;
    align-items: center;
    justify-content: center;
    white-space: nowrap;
    border-right: 1px solid #c0c0c0;
}

.status-bar > span:last-child {
    border-right: 0;
}

.status-bar > .left {
    justify-content: flex-start;
    padding-left: 9px;
}

.status-icon {
    width: 12px;
    height: 12px;
}

.status-bar .zoom {
    padding-left: 4px;
}

.zoom button {
    width: 15px;
    color: #777;
    font-size: 14px;
    line-height: 14px;
}

.zoom input {
    width: 84px;
    height: 14px;
    appearance: none;
    background: linear-gradient(transparent 6px, #999 6px 8px, transparent 8px);
}

.zoom input::-webkit-slider-thumb {
    appearance: none;
    width: 8px;
    height: 8px;
    border: 1px solid #888;
    border-radius: 50%;
    background: #fff;
}

/* TASKBAR */
.taskbar {
    flex: none;
    height: 41px;
    display: flex;
    background: linear-gradient(90deg, #25343b 0 50%, #202d35 72%, #2a2927 78%, #1f2d35 84%);
    color: #f0f0f0;
}

.start {
    width: 50px;
    padding-bottom: 2px;
    display: grid;
    place-items: center;
}

.start svg {
    width: 18px;
    height: 18px;
}

.search {
    width: 358px;
    display: flex;
    align-items: center;
    gap: 11px;
    padding: 0 0 2px 12px;
    background: #f2f2f2;
    border: 1px solid #c8c8c8;
    color: #444;
}

.search svg {
    width: 18px;
    height: 18px;
    stroke: #333;
    stroke-width: 1.5;
}

.search input {
    flex: 1;
    font-size: 15px;
}

.search input::placeholder {
    color: #444;
}

.app {
    width: 52px;
    padding-bottom: 2px;
    display: grid;
    place-items: center;
}

.app svg {
    width: 25px;
    height: 25px;
}

.app .task-view {
    width: 18px;
    height: 18px;
    stroke: #ddd;
    stroke-width: 1.5;
}

.app.open {
    background: linear-gradient(#fbd6a8, #fbd6a8) no-repeat center bottom / 42px 3px;
}

.app.active {
    background: #51606a linear-gradient(#fbd6a8, #fbd6a8) no-repeat center bottom / 100% 3px;
}

.tray {
    margin-left: auto;
    display: flex;
    align-items: center;
}

.tray button {
    width: 25px;
    height: 41px;
    padding-bottom: 2px;
    display: grid;
    place-items: center;
}

.tray svg {
    width: 16px;
    height: 16px;
    stroke: #e8e8e8;
}

.tray .solid {
    fill: #f0f0f0;
    stroke: none;
}

.lang {
    width: 38px;
    text-align: center;
}

.clock {
    width: 74px;
    line-height: 19px;
    text-align: center;
    white-space: nowrap;
}

.tray .notify {
    position: relative;
    width: 52px;
}

.tray .notify svg {
    width: 18px;
    height: 18px;
    margin-right: 6px;
    stroke: none;
}

.badge {
    position: absolute;
    right: 12px;
    bottom: 4px;
    width: 17px;
    height: 17px;
    border: 1px solid #888;
    border-radius: 50%;
    background: #2b3338;
    font-size: 10px;
    font-weight: 700;
    line-height: 15px;
    text-align: center;
}

.show-desktop {
    width: 5px;
    height: 41px;
    border-left: 1px solid #6a747a;
}
```
